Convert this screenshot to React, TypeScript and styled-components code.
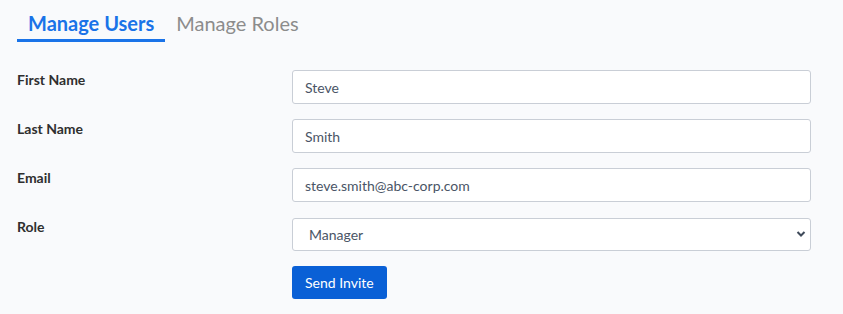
import React, { useState } from 'react';
import styled, { createGlobalStyle } from 'styled-components';

const GlobalStyle = createGlobalStyle`
  html, body {
    margin: 0;
    padding: 0;
    background: #f9fafc;
    font-family: "Lato", "Liberation Sans", Arial, sans-serif;
  }
  * { box-sizing: border-box; }
`;

const Page = styled.div`
  padding: 0 32px 0 17px;
  min-height: 314px;
`;

const Tabs = styled.div`
  display: flex;
  align-items: flex-end;
`;

const Tab = styled.button<{ $active?: boolean }>`
  background: none;
  border: none;
  margin: 0;
  padding: 11px 11px 4px;
  font-family: inherit;
  font-size: 20px;
  line-height: 24px;
  font-weight: ${p => (p.$active ? 700 : 400)};
  color: ${p => (p.$active ? '#1a73e8' : '#8c8c8c')};
  border-bottom: 3px solid ${p => (p.$active ? '#1a73e8' : 'transparent')};
  cursor: pointer;
`;

const Form = styled.form`
  margin-top: 28px;
  display: grid;
  grid-template-columns: 275px 1fr;
  row-gap: 15px;
`;

const Label = styled.label`
  font-size: 14px;
  line-height: 16px;
  font-weight: 700;
  color: #2f2f2f;
  padding-top: 2px;
`;

const Input = styled.input`
  width: 100%;
  height: 34px;
  border: 1px solid #c9ced6;
  border-radius: 3px;
  background: #fff;
  padding: 0 12px;
  font-family: inherit;
  font-size: 14px;
  color: #4a5566;
  outline: none;
`;

const SelectWrap = styled.div`
  position: relative;
  margin-top: 1px;
`;

const Select = styled.select`
  width: 100%;
  height: 33px;
  border: 1px solid #c9ced6;
  border-radius: 3px;
  background: #fff;
  padding: 0 16px;
  font-family: inherit;
  font-size: 14px;
  color: #4a5566;
  appearance: none;
  outline: none;
`;

const Chevron = styled.svg`
  position: absolute;
  right: 5px;
  top: 12px;
  pointer-events: none;
`;

const Spacer = styled.div``;

const Button = styled.button`
  justify-self: start;
  height: 33px;
  padding: 0 13px;
  border: none;
  border-radius: 3px;
  background: #0a60d6;
  color: #fff;
  font-family: inherit;
  font-size: 14px;
  cursor: pointer;
`;

export default function App() {
  const [tab, setTab] = useState('users');
  return (
    <>
      <GlobalStyle />
      <Page>
        <Tabs>
          <Tab type="button" $active={tab === 'users'} onClick={() => setTab('users')}>
            Manage Users
          </Tab>
          <Tab type="button" $active={tab === 'roles'} onClick={() => setTab('roles')}>
            Manage Roles
          </Tab>
        </Tabs>
        <Form onSubmit={e => e.preventDefault()}>
          <Label htmlFor="first">First Name</Label>
          <Input id="first" defaultValue="Steve" />
          <Label htmlFor="last">Last Name</Label>
          <Input id="last" defaultValue="Smith" />
          <Label htmlFor="email">Email</Label>
          <Input id="email" defaultValue="steve.smith@abc-corp.com" />
          <Label htmlFor="role">Role</Label>
          <SelectWrap>
            <Select id="role" defaultValue="Manager">
              <option>Manager</option>
              <option>Admin</option>
              <option>User</option>
            </Select>
            <Chevron width="10" height="8" viewBox="0 0 10 8">
              <path d="M1.5 2 L5 5.5 L8.5 2" fill="none" stroke="#3f4a5a" strokeWidth="2" />
            </Chevron>
          </SelectWrap>
          <Spacer />
          <Button type="submit">Send Invite</Button>
        </Form>
      </Page>
    </>
  );
}
